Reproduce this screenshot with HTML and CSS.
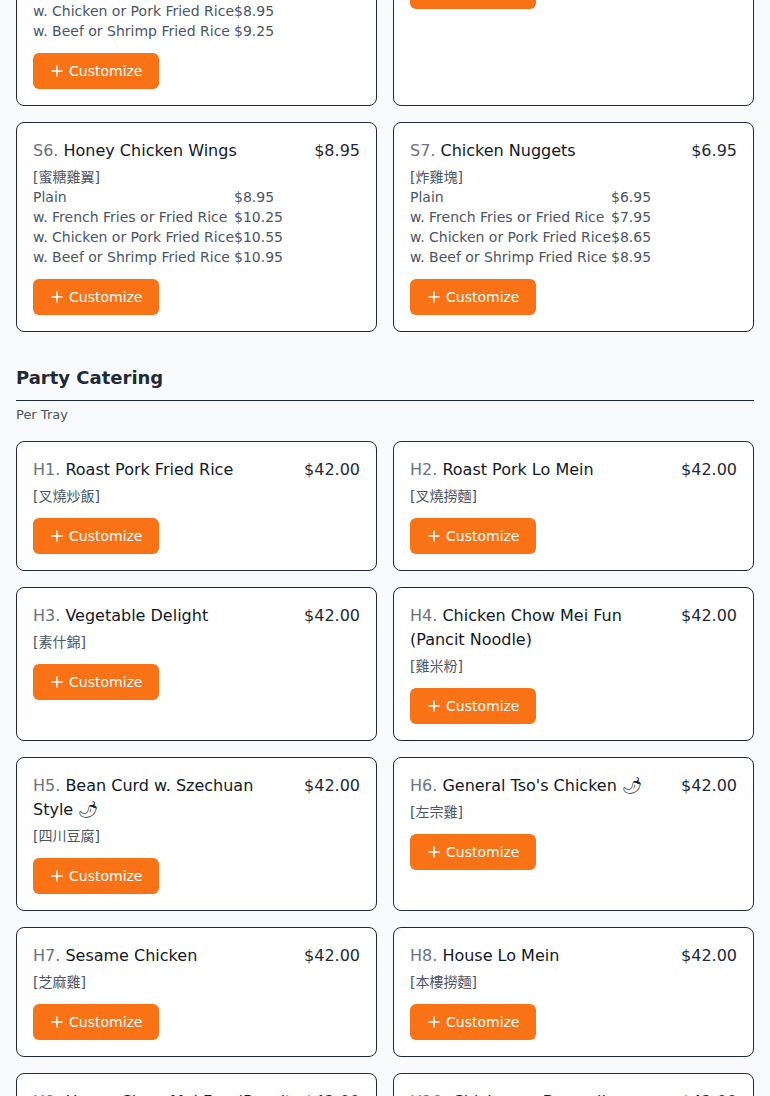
FILE: index.html
```html
<!DOCTYPE html>
<html lang="en">
<head>
<meta charset="utf-8">
<title>Menu</title>
<link rel="stylesheet" href="styles.css">
</head>
<body>
<div class="viewport">
  <main class="menu">
    <section class="section section-scrolled">
      <div class="grid">
        <article class="card">
          <div class="card-head">
            <h3 class="card-title"><span class="code">S4.</span> Chicken Fingers</h3>
            <span class="price">$7.25</span>
          </div>
          <div class="cn">[炸雞條]</div>
          <table class="options">
            <tr><td>Plain</td><td>$7.25</td></tr>
            <tr><td>w. French Fries or Fried Rice</td><td>$8.25</td></tr>
            <tr><td>w. Chicken or Pork Fried Rice</td><td>$8.95</td></tr>
            <tr><td>w. Beef or Shrimp Fried Rice</td><td>$9.25</td></tr>
          </table>
          <button class="btn" type="button"><svg class="btn-icon" viewBox="0 0 16 16" aria-hidden="true"><path d="M8 3v10M3 8h10"/></svg>Customize</button>
        </article>
        <article class="card">
          <div class="card-head">
            <h3 class="card-title"><span class="code">S5.</span> French Fries</h3>
            <span class="price">$3.25</span>
          </div>
          <div class="cn">[炸薯條]</div>
          <button class="btn" type="button"><svg class="btn-icon" viewBox="0 0 16 16" aria-hidden="true"><path d="M8 3v10M3 8h10"/></svg>Customize</button>
        </article>

        <article class="card">
          <div class="card-head">
            <h3 class="card-title"><span class="code">S6.</span> Honey Chicken Wings</h3>
            <span class="price">$8.95</span>
          </div>
          <div class="cn">[蜜糖雞翼]</div>
          <table class="options">
            <tr><td>Plain</td><td>$8.95</td></tr>
            <tr><td>w. French Fries or Fried Rice</td><td>$10.25</td></tr>
            <tr><td>w. Chicken or Pork Fried Rice</td><td>$10.55</td></tr>
            <tr><td>w. Beef or Shrimp Fried Rice</td><td>$10.95</td></tr>
          </table>
          <button class="btn" type="button"><svg class="btn-icon" viewBox="0 0 16 16" aria-hidden="true"><path d="M8 3v10M3 8h10"/></svg>Customize</button>
        </article>
        <article class="card">
          <div class="card-head">
            <h3 class="card-title"><span class="code">S7.</span> Chicken Nuggets</h3>
            <span class="price">$6.95</span>
          </div>
          <div class="cn">[炸雞塊]</div>
          <table class="options">
            <tr><td>Plain</td><td>$6.95</td></tr>
            <tr><td>w. French Fries or Fried Rice</td><td>$7.95</td></tr>
            <tr><td>w. Chicken or Pork Fried Rice</td><td>$8.65</td></tr>
            <tr><td>w. Beef or Shrimp Fried Rice</td><td>$8.95</td></tr>
          </table>
          <button class="btn" type="button"><svg class="btn-icon" viewBox="0 0 16 16" aria-hidden="true"><path d="M8 3v10M3 8h10"/></svg>Customize</button>
        </article>
      </div>
    </section>

    <section class="section">
      <h2 class="section-title">Party Catering</h2>
      <p class="section-note">Per Tray</p>
      <div class="grid">
        <article class="card">
          <div class="card-head">
            <h3 class="card-title"><span class="code">H1.</span> Roast Pork Fried Rice</h3>
            <span class="price">$42.00</span>
          </div>
          <div class="cn">[叉燒炒飯]</div>
          <button class="btn" type="button"><svg class="btn-icon" viewBox="0 0 16 16" aria-hidden="true"><path d="M8 3v10M3 8h10"/></svg>Customize</button>
        </article>
        <article class="card">
          <div class="card-head">
            <h3 class="card-title"><span class="code">H2.</span> Roast Pork Lo Mein</h3>
            <span class="price">$42.00</span>
          </div>
          <div class="cn">[叉燒撈麵]</div>
          <button class="btn" type="button"><svg class="btn-icon" viewBox="0 0 16 16" aria-hidden="true"><path d="M8 3v10M3 8h10"/></svg>Customize</button>
        </article>
        <article class="card">
          <div class="card-head">
            <h3 class="card-title"><span class="code">H3.</span> Vegetable Delight</h3>
            <span class="price">$42.00</span>
          </div>
          <div class="cn">[素什錦]</div>
          <button class="btn" type="button"><svg class="btn-icon" viewBox="0 0 16 16" aria-hidden="true"><path d="M8 3v10M3 8h10"/></svg>Customize</button>
        </article>
        <article class="card">
          <div class="card-head">
            <h3 class="card-title"><span class="code">H4.</span> Chicken Chow Mei Fun (Pancit Noodle)</h3>
            <span class="price">$42.00</span>
          </div>
          <div class="cn">[雞米粉]</div>
          <button class="btn" type="button"><svg class="btn-icon" viewBox="0 0 16 16" aria-hidden="true"><path d="M8 3v10M3 8h10"/></svg>Customize</button>
        </article>
        <article class="card">
          <div class="card-head">
            <h3 class="card-title"><span class="code">H5.</span> Bean Curd w. Szechuan Style 🌶</h3>
            <span class="price">$42.00</span>
          </div>
          <div class="cn">[四川豆腐]</div>
          <button class="btn" type="button"><svg class="btn-icon" viewBox="0 0 16 16" aria-hidden="true"><path d="M8 3v10M3 8h10"/></svg>Customize</button>
        </article>
        <article class="card">
          <div class="card-head">
            <h3 class="card-title"><span class="code">H6.</span> General Tso's Chicken 🌶</h3>
            <span class="price">$42.00</span>
          </div>
          <div class="cn">[左宗雞]</div>
          <button class="btn" type="button"><svg class="btn-icon" viewBox="0 0 16 16" aria-hidden="true"><path d="M8 3v10M3 8h10"/></svg>Customize</button>
        </article>
        <article class="card">
          <div class="card-head">
            <h3 class="card-title"><span class="code">H7.</span> Sesame Chicken</h3>
            <span class="price">$42.00</span>
          </div>
          <div class="cn">[芝麻雞]</div>
          <button class="btn" type="button"><svg class="btn-icon" viewBox="0 0 16 16" aria-hidden="true"><path d="M8 3v10M3 8h10"/></svg>Customize</button>
        </article>
        <article class="card">
          <div class="card-head">
            <h3 class="card-title"><span class="code">H8.</span> House Lo Mein</h3>
            <span class="price">$42.00</span>
          </div>
          <div class="cn">[本樓撈麵]</div>
          <button class="btn" type="button"><svg class="btn-icon" viewBox="0 0 16 16" aria-hidden="true"><path d="M8 3v10M3 8h10"/></svg>Customize</button>
        </article>
        <article class="card">
          <div class="card-head">
            <h3 class="card-title"><span class="code">H9.</span> House Chow Mei Fun (Pancit Noodle)</h3>
            <span class="price">$42.00</span>
          </div>
          <div class="cn">[本樓米粉]</div>
          <button class="btn" type="button"><svg class="btn-icon" viewBox="0 0 16 16" aria-hidden="true"><path d="M8 3v10M3 8h10"/></svg>Customize</button>
        </article>
        <article class="card">
          <div class="card-head">
            <h3 class="card-title"><span class="code">H10.</span> Chicken w. Broccoli</h3>
            <span class="price">$42.00</span>
          </div>
          <div class="cn">[芥蘭雞]</div>
          <button class="btn" type="button"><svg class="btn-icon" viewBox="0 0 16 16" aria-hidden="true"><path d="M8 3v10M3 8h10"/></svg>Customize</button>
        </article>
      </div>
    </section>
  </main>
</div>
</body>
</html>
```

FILE: styles.css
```css
* {
  box-sizing: border-box;
}

html,
body {
  margin: 0;
  padding: 0;
}

body {
  background: #f9fafb;
  font-family: "DejaVu Sans", "Noto Sans CJK TC", sans-serif;
  color: #111827;
}

.viewport {
  height: 1096px;
  overflow: hidden;
}

.menu {
  padding: 0 16px;
  margin-top: -104px;
}

.section + .section {
  margin-top: 32px;
}

.section-title {
  margin: 0;
  padding-bottom: 8px;
  border-bottom: 1px solid #1f2937;
  font-size: 18px;
  line-height: 28px;
  font-weight: bold;
  color: #1f2937;
}

.section-note {
  margin: 4px 0 0;
  font-size: 13px;
  line-height: 20px;
  color: #4b5563;
}

.section-note + .grid {
  margin-top: 16px;
}

.grid {
  display: grid;
  grid-template-columns: 1fr 1fr;
  gap: 16px;
}

.card {
  background: #ffffff;
  border: 1px solid #1f2937;
  border-radius: 8px;
  padding: 16px;
  display: flex;
  flex-direction: column;
  align-items: flex-start;
}

.card-head {
  display: flex;
  justify-content: space-between;
  align-items: flex-start;
  gap: 8px;
  width: 100%;
  font-size: 16px;
  line-height: 24px;
}

.card-title {
  margin: 0;
  font-size: 16px;
  font-weight: normal;
  color: #111827;
}

.code {
  color: #6b7280;
}

.price {
  color: #1f2937;
  white-space: nowrap;
}

.cn {
  margin-top: 4px;
  font-size: 14px;
  line-height: 20px;
  color: #4b5563;
}

.options {
  border-collapse: collapse;
  border-spacing: 0;
  font-size: 14px;
  line-height: 20px;
  color: #4b5563;
}

.options td {
  padding: 0;
  white-space: nowrap;
}

.btn {
  margin-top: 12px;
  height: 36px;
  padding: 0 16px;
  display: inline-flex;
  align-items: center;
  gap: 4px;
  border: none;
  border-radius: 6px;
  background: #f97316;
  color: #ffffff;
  font-family: "DejaVu Sans", sans-serif;
  font-size: 14px;
  line-height: 20px;
  cursor: pointer;
}

.btn-icon {
  width: 16px;
  height: 16px;
  flex: none;
  fill: none;
  stroke: #ffffff;
  stroke-width: 1.6;
  stroke-linecap: round;
}
```
